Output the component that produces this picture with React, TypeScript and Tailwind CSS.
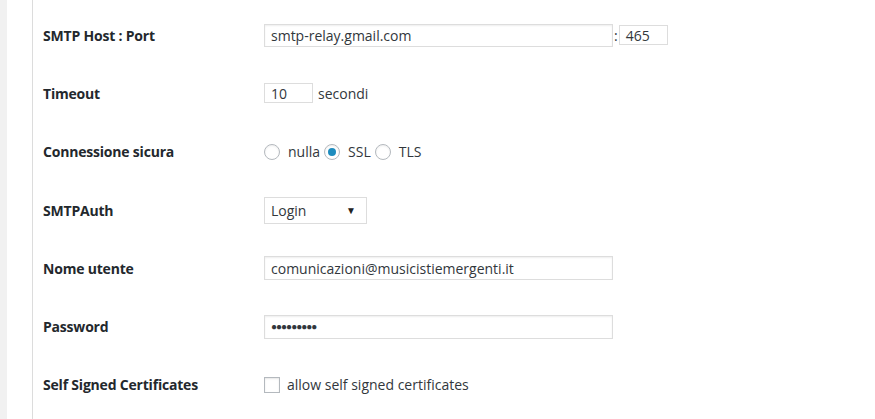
import React from "react";

const font = { fontFamily: '"Open Sans", "Noto Sans", sans-serif' };

function Row({ label, children }: { label: string; children: React.ReactNode }) {
  return (
    <div className="flex h-[58.3px] items-center">
      <div className="w-[221px] shrink-0 text-[14px] font-bold tracking-[-0.2px] text-[#23282d]">{label}</div>
      <div className="flex items-center text-[14px] text-[#32373c]">{children}</div>
    </div>
  );
}

function Radio({ checked, label }: { checked?: boolean; label: string }) {
  return (
    <label className="flex items-center">
      <span className="mr-[8px] flex h-[16px] w-[16px] items-center justify-center rounded-full border border-[#b4b9be] bg-white shadow-[inset_0_1px_2px_rgba(0,0,0,0.07)]">
        {checked && <span className="h-[8px] w-[8px] rounded-full bg-[#1e8cbe]" />}
      </span>
      <span className="mr-[4px]">{label}</span>
    </label>
  );
}

export default function App() {
  return (
    <div className="flex h-[419px] bg-white" style={font}>
      <div className="w-[7px] bg-[#f1f1f1]" />
      <div className="w-[25px]" />
      <div className="flex-1 border-l border-[#dcdcdc] pl-[10px] pt-[6px]">
        <Row label="SMTP Host : Port">
          <div className="flex h-[23px] w-[349px] items-center border border-[#ddd] px-[6px] shadow-[inset_0_1px_2px_rgba(0,0,0,0.07)]">
            smtp-relay.gmail.com
          </div>
          <span className="px-[1px]">:</span>
          <div className="flex h-[20px] w-[49px] items-center border border-[#ddd] px-[6px]">465</div>
        </Row>
        <Row label="Timeout">
          <div className="flex h-[20px] w-[49px] items-center border border-[#ddd] px-[6px]">10</div>
          <span className="ml-[5px]">secondi</span>
        </Row>
        <Row label="Connessione sicura">
          <Radio label="nulla" />
          <Radio checked label="SSL" />
          <Radio label="TLS" />
        </Row>
        <Row label="SMTPAuth">
          <div className="flex h-[27px] w-[103px] items-center justify-between border border-[#ddd] pl-[6px] pr-[10px]">
            <span>Login</span>
            <span className="text-[10px] text-[#222]">▼</span>
          </div>
        </Row>
        <Row label="Nome utente">
          <div className="flex h-[24px] w-[349px] items-center border border-[#ddd] px-[6px] shadow-[inset_0_1px_2px_rgba(0,0,0,0.07)]">
            comunicazioni@musicistiemergenti.it
          </div>
        </Row>
        <Row label="Password">
          <div className="flex h-[24px] w-[349px] items-center border border-[#ddd] px-[6px] text-[10px] tracking-[-1px] shadow-[inset_0_1px_2px_rgba(0,0,0,0.07)]">
            ●●●●●●●●●
          </div>
        </Row>
        <Row label="Self Signed Certificates">
          <span className="mr-[7px] h-[16px] w-[16px] border border-[#b4b9be] bg-white shadow-[inset_0_1px_2px_rgba(0,0,0,0.1)]" />
          <span>allow self signed certificates</span>
        </Row>
      </div>
    </div>
  );
}
